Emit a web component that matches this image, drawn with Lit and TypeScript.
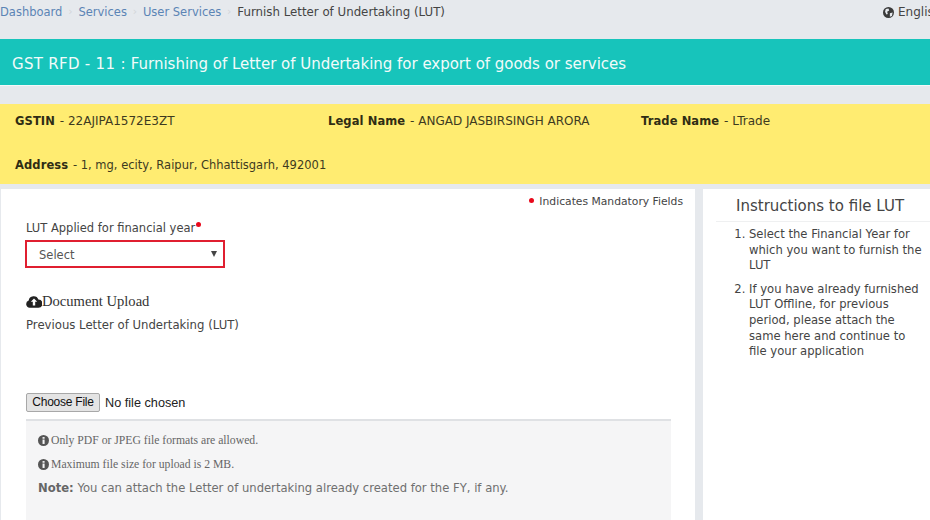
import { LitElement, html, css } from "lit";
import { customElement } from "lit/decorators.js";

@customElement("app-root")
export class AppRoot extends LitElement {
  static styles = css`
    :host { display: block; width: 930px; height: 520px; overflow: hidden; background: #e6e9ed; font-family: "DejaVu Sans", Verdana, sans-serif; font-size: 12px; color: #333; }
    .crumbs { height: 39px; padding: 4px 0 0 0; box-sizing: border-box; display: flex; align-items: flex-start; line-height: 16px; white-space: nowrap; }
    .crumbs a { color: #5b84b5; font-size: 11.5px; }
    .crumbs .sep { color: #d3d6da; width: 16px; text-align: center; font-size: 11px; }
    .crumbs .cur { color: #444; font-size: 11.8px; }
    .lang { margin-left: auto; display: flex; align-items: center; gap: 4px; color: #444; width: 47px; overflow: hidden; flex: none; }
    .lang svg { flex: none; }
    .title { height: 46px; box-sizing: border-box; background: #17c4bb; color: #f2fbfa; font-size: 15px; padding: 4px 12px 0; display: block; line-height: 43px; letter-spacing: -.02px; white-space: nowrap; }
    .title .pre { letter-spacing: .3px; }
    .rule { height: 1px; background: #f4f8f8; }
    .info { margin-top: 18px; height: 80px; background: #ffec71; padding: 9px 15px 0; box-sizing: border-box; color: #3d3a1f; font-size: 12px; line-height: 16px; display: grid; grid-template-columns: 313px 313px 1fr; grid-template-rows: 16px 16px; row-gap: 28px; }
    .info b { color: #2f2c14; font-size: 11.5px; letter-spacing: .1px; margin-right: 1px; }
    .info .addr { grid-column: 1 / -1; font-size: 11.5px; }
    .body { margin-top: 5px; display: grid; grid-template-columns: 694px 227px; gap: 8px; padding-left: 1px; height: 331px; }
    .left, .right { background: #fff; }
    .left { padding: 0 25px; box-sizing: border-box; display: flex; flex-direction: column; }
    .mand { align-self: flex-end; margin-right: -13px; height: 24px; padding-top: 2px; box-sizing: border-box; line-height: 16px; font-size: 10.75px; color: #444; display: flex; align-items: center; gap: 5px; }
    .dot { display: inline-block; width: 5px; height: 5px; border-radius: 50%; background: #e8091b; }
    .mand .dot { margin-top: -4px; }
    .label { margin-top: 7px; line-height: 16px; color: #444; font-size: 11.5px; display: flex; }
    .label .dot { margin: 2px 0 0 1px; }
    .sel { margin: 4px 0 0 -1px; width: 200px; height: 28px; box-sizing: border-box; border: 2.5px solid #e01f30; padding: 1px 6px 0 12px; display: flex; align-items: center; justify-content: space-between; color: #555; font-size: 11.5px; }
    .arrow { width: 0; height: 0; border-left: 3px solid transparent; border-right: 3px solid transparent; border-top: 6px solid #444; margin-top: -2px; }
    .doc { margin-top: 24px; display: flex; align-items: center; font-family: "Liberation Serif", serif; font-size: 14.6px; color: #333; line-height: 18px; }
    .doc svg { margin-left: 0; flex: none; }
    .prev { margin-top: 7px; line-height: 16px; font-size: 11.7px; color: #444; }
    .file { margin-top: 60px; display: flex; align-items: center; gap: 5px; font-family: "Liberation Sans", sans-serif; font-size: 12.7px; color: #222; }
    .btn { width: 74px; height: 19px; box-sizing: border-box; background: #e4e4e4; border: 1px solid #a8a8a8; border-radius: 2px; font-size: 12px; letter-spacing: -.25px; line-height: 16px; text-align: center; color: #111; }
    .note { margin-top: 7px; width: 645px; flex: 1; box-sizing: border-box; border-top: 2px solid #dfe1e4; background: #f5f5f6; padding: 12px 12px 0; color: #6a6a6a; }
    .fmt { display: flex; align-items: center; gap: 2px; font-family: "Liberation Serif", serif; font-size: 11.7px; height: 15px; line-height: 15px; margin-bottom: 9px; color: #666; }
    .n { font-size: 11.6px; line-height: 15px; color: #6f6f6f; }
    .n b { color: #666; }
    .right { padding-top: 7px; box-sizing: border-box; }
    h2 { margin: 0 0 0 33px; font-weight: normal; font-size: 15px; line-height: 20px; color: #444; }
    hr { border: 0; border-top: 1px solid #eff0f1; margin: 5px 0 0 13px; }
    ol { margin: 5px 0 0; padding: 0 4px 0 46px; font-size: 11.6px; line-height: 15.6px; color: #444; }
    li { margin-bottom: 8px; }
  `;

  info() {
    return html`<svg width="11" height="11" viewBox="0 0 16 16"><circle cx="8" cy="8" r="8" fill="#555"/><rect x="6.6" y="6.6" width="3" height="6.4" fill="#f5f5f6"/><rect x="6.6" y="3" width="3" height="2.4" fill="#f5f5f6"/></svg>`;
  }

  render() {
    return html`
      <div class="crumbs">
        <a>Dashboard</a><span class="sep">›</span><a>Services</a><span class="sep">›</span><a>User Services</a><span class="sep">›</span><span class="cur">Furnish Letter of Undertaking (LUT)</span>
        <span class="lang"><svg width="11" height="11" viewBox="0 0 16 16"><circle cx="8" cy="8" r="8" fill="#3a3a3a"/><path d="M4 3l4-1 1 3-3 2 1 3-2 1-2-4zM10 9l4-1-1 5-3 1z" fill="#e6e9ed"/></svg><span>English</span></span>
      </div>
      <div class="title"><span class="pre">GST RFD - 11 : </span>Furnishing of Letter of Undertaking for export of goods or services</div>
      <div class="rule"></div>
      <div class="info">
        <div><b>GSTIN</b> - 22AJIPA1572E3ZT</div>
        <div><b>Legal Name</b> - ANGAD JASBIRSINGH ARORA</div>
        <div><b>Trade Name</b> - LTrade</div>
        <div class="addr"><b>Address</b> - 1, mg, ecity, Raipur, Chhattisgarh, 492001</div>
      </div>
      <div class="body">
        <div class="left">
          <div class="mand"><span class="dot"></span><span>Indicates Mandatory Fields</span></div>
          <div class="label"><span>LUT Applied for financial year</span><span class="dot"></span></div>
          <div class="sel"><span>Select</span><span class="arrow"></span></div>
          <div class="doc"><svg width="16" height="13" viewBox="0 0 16 13"><path d="M3.7 12.8a3.7 3.7 0 0 1-1-7.2A5 5 0 0 1 12.4 4.6a4 4 0 0 1-.2 8.2z" fill="#222"/><path d="M8 3.4l3.2 3.4H9.2v3.6H6.8V6.8H4.8z" fill="#fff"/></svg><span>Document Upload</span></div>
          <div class="prev">Previous Letter of Undertaking (LUT)</div>
          <div class="file"><span class="btn">Choose File</span><span>No file chosen</span></div>
          <div class="note">
            <div class="fmt">${this.info()}<span>Only PDF or JPEG file formats are allowed.</span></div>
            <div class="fmt">${this.info()}<span>Maximum file size for upload is 2 MB.</span></div>
            <div class="n"><b>Note:</b> You can attach the Letter of undertaking already created for the FY, if any.</div>
          </div>
        </div>
        <div class="right">
          <h2>Instructions to file LUT</h2>
          <hr />
          <ol>
            <li>Select the Financial Year for which you want to furnish the LUT</li>
            <li>If you have already furnished LUT Offline, for previous period, please attach the same here and continue to file your application</li>
          </ol>
        </div>
      </div>
    `;
  }
}
